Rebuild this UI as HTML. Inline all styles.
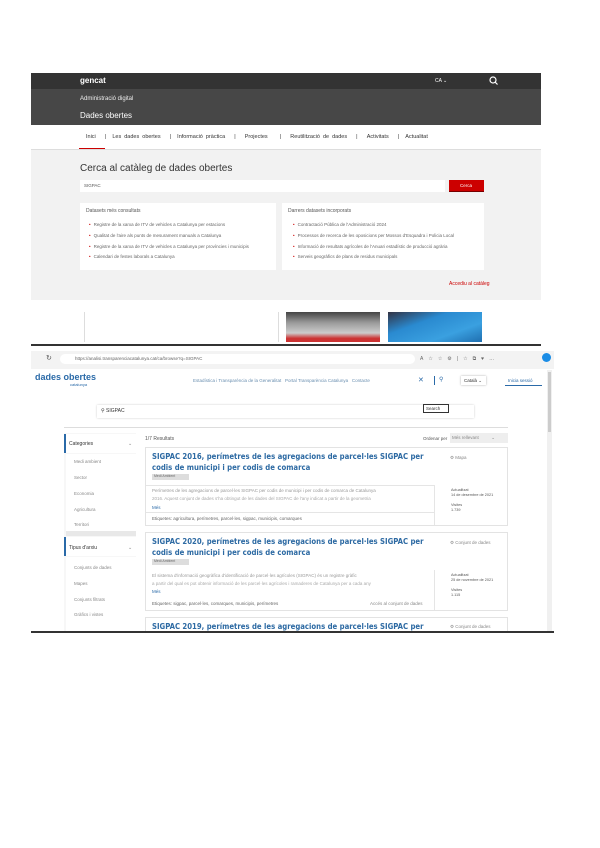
<!DOCTYPE html>
<html><head><meta charset="utf-8"><style>
*{margin:0;padding:0;box-sizing:border-box}
body{width:600px;height:848px;background:#fff;position:relative;overflow:hidden;font-family:"Liberation Sans",sans-serif}
.a{position:absolute;white-space:nowrap}
.t{font-size:5px;color:#555}
.li{font-size:4.5px;color:#666}
.li b{color:#c00;font-weight:normal;margin-right:3px}
.ct{font-size:7.7px;color:#2d6aa3;font-weight:bold;line-height:11px;font-family:"DejaVu Sans Condensed","Liberation Sans",sans-serif;letter-spacing:0}
.card{position:absolute;left:145px;width:363px;background:#fff;border:1px solid #e3e3e3}
.sm{font-size:4.5px;color:#888}
</style></head><body>
<div class="a" style="left:31px;top:73px;width:510px;height:16px;background:#333"></div>
<div class="a" style="left:31px;top:89px;width:510px;height:36px;background:#474747"></div>
<div class="a" style="left:80px;top:76px;font-size:8px;color:#fff;font-weight:bold">gencat</div>
<div class="a" style="left:435px;top:78px;font-size:5px;color:#fff">CA ⌄</div>
<svg class="a" style="left:489px;top:76px" width="9" height="9"><circle cx="4" cy="4" r="3" fill="none" stroke="#fff" stroke-width="1.2"/><line x1="6" y1="6" x2="8.5" y2="8.5" stroke="#fff" stroke-width="1.2"/></svg>
<div class="a" style="left:80px;top:96px;font-size:6px;color:#eee">Administració digital</div>
<div class="a" style="left:80px;top:111px;font-size:8px;color:#fff">Dades obertes</div>
<div class="a" style="left:31px;top:125px;width:510px;height:25px;background:#fff"></div>
<div class="a" style="left:86px;top:134px;font-size:5.5px;color:#333;word-spacing:1.5px">Inici &nbsp;&nbsp;| &nbsp;Les dades obertes &nbsp;&nbsp;| &nbsp;Informació pràctica &nbsp;&nbsp;| &nbsp;&nbsp;Projectes &nbsp;&nbsp;&nbsp;| &nbsp;&nbsp;Reutilització de dades &nbsp;&nbsp;| &nbsp;&nbsp;Activitats &nbsp;&nbsp;| &nbsp;Actualitat</div>
<div class="a" style="left:79px;top:148px;width:26px;height:1px;background:#c00"></div>
<div class="a" style="left:31px;top:149px;width:510px;height:1px;background:#ddd"></div>
<div class="a" style="left:31px;top:150px;width:510px;height:150px;background:#f2f2f2"></div>
<div class="a" style="left:80px;top:163px;font-size:10px;color:#333">Cerca al catàleg de dades obertes</div>
<div class="a" style="left:80px;top:180px;width:365px;height:12px;background:#fff"></div>
<div class="a" style="left:84px;top:183px;font-size:4.5px;color:#555">SIGPAC</div>
<div class="a" style="left:449px;top:180px;width:35px;height:12px;background:#c00;border-bottom:1px solid #700"></div>
<div class="a" style="left:460px;top:183px;font-size:4.5px;color:#fff">Cerca</div>
<div class="a" style="left:80px;top:203px;width:196px;height:67px;background:#fff"></div>
<div class="a" style="left:282px;top:203px;width:202px;height:67px;background:#fff"></div>
<div class="a t" style="left:86px;top:208px">Datasets més consultats</div>
<div class="a li" style="left:89px;top:222px"><b>•</b>Registre de la xarxa de ITV de vehicles a Catalunya per estacions</div>
<div class="a li" style="left:89px;top:233px"><b>•</b>Qualitat de l'aire als punts de mesurament manuals a Catalunya</div>
<div class="a li" style="left:89px;top:244px"><b>•</b>Registre de la xarxa de ITV de vehicles a Catalunya per províncies i municipis</div>
<div class="a li" style="left:89px;top:254px"><b>•</b>Calendari de festes laborals a Catalunya</div>
<div class="a t" style="left:288px;top:208px">Darrers datasets incorporats</div>
<div class="a li" style="left:293px;top:222px"><b>•</b>Contractació Pública de l'Administració 2024</div>
<div class="a li" style="left:293px;top:233px"><b>•</b>Processos de recerca de les oposicions per Mossos d'Esquadra i Policia Local</div>
<div class="a li" style="left:293px;top:244px"><b>•</b>Informació de resultats agrícoles de l'Anuari estadístic de producció agrària</div>
<div class="a li" style="left:293px;top:254px"><b>•</b>Serveis geogràfics de plans de residus municipals</div>
<div class="a" style="left:449px;top:281px;font-size:5px;color:#c00">Accediu al catàleg</div>
<div class="a" style="left:84px;top:312px;width:1px;height:30px;background:#ddd"></div>
<div class="a" style="left:278px;top:312px;width:1px;height:30px;background:#ddd"></div>
<div class="a" style="left:286px;top:312px;width:94px;height:30px;background:linear-gradient(#444 0%,#999 35%,#ccc 70%,#c33 88%)"></div>
<div class="a" style="left:388px;top:312px;width:94px;height:30px;background:linear-gradient(160deg,#334 0%,#2a8ad0 35%,#3aa0e0 70%,#1f6fb0)"></div>
<div class="a" style="left:31px;top:344px;width:510px;height:2px;background:#333"></div>

<div class="a" style="left:31px;top:351px;width:523px;height:18px;background:#f3f3f3"></div>
<div class="a" style="left:60px;top:354px;width:355px;height:10px;background:#fff;border-radius:5px"></div>
<div class="a" style="left:46px;top:354px;font-size:7px;color:#555">↻</div>
<div class="a" style="left:75px;top:356px;font-size:4.5px;color:#666">https://analisi.transparenciacatalunya.cat/ca/browse?q=SIGPAC</div>
<div class="a" style="left:420px;top:356px;font-size:5px;color:#666;letter-spacing:5px">A☆☆⚙|☆⧉♥…</div>
<div class="a" style="left:542px;top:353px;width:9px;height:9px;border-radius:50%;background:#1b8de6"></div>
<div class="a" style="left:547px;top:370px;width:5px;height:262px;background:#f0f0f0"></div>
<div class="a" style="left:548px;top:372px;width:3px;height:60px;background:#ccc"></div>
<div class="a" style="left:35px;top:372px;font-size:9px;color:#2a6aa8;font-weight:bold">dades obertes</div>
<div class="a" style="left:70px;top:382px;font-size:4px;color:#2a6aa8">catalunya</div>
<div class="a" style="left:193px;top:378px;font-size:4.5px;color:#6a8fb0">Estadística i Transparència de la Generalitat &nbsp; Portal Transparència Catalunya &nbsp; Contacte</div>
<div class="a" style="left:418px;top:376px;font-size:7px;color:#2a6aa8">✕</div>
<div class="a" style="left:434px;top:376px;width:1px;height:9px;background:#2a6aa8"></div>
<div class="a" style="left:439px;top:376px;font-size:6px;color:#2a6aa8">⚲</div>
<div class="a" style="left:461px;top:376px;width:25px;height:9px;background:#fff;box-shadow:0 0 2px #aaa;font-size:4.5px;color:#333;padding:2px 3px">Català ⌄</div>
<div class="a" style="left:508px;top:378px;font-size:4.5px;color:#2a6aa8">Inicia sessió</div>
<div class="a" style="left:505px;top:385px;width:37px;height:1px;background:#2a6aa8"></div>
<div class="a" style="left:97px;top:405px;width:377px;height:13px;background:#fff;box-shadow:0 0 2px #ccc"></div>
<div class="a" style="left:101px;top:408px;font-size:5px;color:#333">⚲ SIGPAC</div>
<div class="a" style="left:423px;top:404px;width:26px;height:9px;border:1px solid #333;font-size:4.5px;color:#333;padding:1px 2px;background:#fff">Search</div>
<div class="a" style="left:64px;top:427px;width:444px;height:1px;background:#ddd"></div>
<div class="a" style="left:64px;top:433px;width:72px;height:200px;background:#f7f7f7"></div>
<div class="a" style="left:64px;top:434px;width:72px;height:19px;background:#fff;border-left:2px solid #2a6aa8"></div>
<div class="a" style="left:69px;top:441px;font-size:5px;color:#333">Categories</div>
<div class="a" style="left:128px;top:441px;font-size:5px;color:#888">⌄</div>
<div class="a" style="left:66px;top:454px;width:70px;height:78px;background:#fff"></div>
<div class="a sm" style="left:74px;top:459px">Medi ambient</div>
<div class="a sm" style="left:74px;top:475px">Sector</div>
<div class="a sm" style="left:74px;top:491px">Economia</div>
<div class="a sm" style="left:74px;top:507px">Agricultura</div>
<div class="a sm" style="left:74px;top:522px">Territori</div>
<div class="a" style="left:66px;top:531px;width:70px;height:5px;background:#e8e8e8"></div>
<div class="a" style="left:64px;top:537px;width:72px;height:19px;background:#fff;border-left:2px solid #2a6aa8"></div>
<div class="a" style="left:69px;top:545px;font-size:5px;color:#333">Tipus d'arxiu</div>
<div class="a" style="left:128px;top:545px;font-size:5px;color:#888">⌄</div>
<div class="a" style="left:66px;top:557px;width:70px;height:76px;background:#fff"></div>
<div class="a sm" style="left:74px;top:565px">Conjunts de dades</div>
<div class="a sm" style="left:74px;top:581px">Mapes</div>
<div class="a sm" style="left:74px;top:597px">Conjunts filtrats</div>
<div class="a sm" style="left:74px;top:612px">Gràfics i vistes</div>
<div class="a" style="left:145px;top:436px;font-size:5px;color:#555">1/7 Resultats</div>
<div class="a" style="left:423px;top:436px;font-size:4.5px;color:#555">Ordenar per</div>
<div class="a" style="left:450px;top:433px;width:58px;height:10px;background:#eee;font-size:4.5px;color:#888;padding:2px">Més rellevant &nbsp;&nbsp;&nbsp;&nbsp;&nbsp;&nbsp;&nbsp;&nbsp;&nbsp;⌄</div>

<div class="card" style="top:447px;height:79px"></div>
<div class="a ct" style="left:152px;top:451px">SIGPAC 2016, perímetres de les agregacions de parcel·les SIGPAC per<br>codis de municipi i per codis de comarca</div>
<div class="a" style="left:152px;top:474px;width:37px;height:6px;background:#ddd;font-size:3.5px;color:#666;padding-left:2px">Medi Ambient</div>
<div class="a sm" style="left:450px;top:455px">⚙ Mapa</div>
<div class="a" style="left:146px;top:485px;width:289px;height:1px;background:#e5e5e5"></div>
<div class="a" style="left:434px;top:485px;width:1px;height:40px;background:#e5e5e5"></div>
<div class="a sm" style="left:152px;top:488px;color:#999">Perímetres de les agregacions de parcel·les SIGPAC per codis de municipi i per codis de comarca de Catalunya</div>
<div class="a sm" style="left:152px;top:496px;color:#aaa">2016. Aquest conjunt de dades s'ha obtingut de les dades del SIGPAC de l'any indicat a partir de la geometria</div>
<div class="a" style="left:152px;top:505px;font-size:4.5px;color:#2a6aa8">Més</div>
<div class="a" style="left:146px;top:512px;width:289px;height:1px;background:#e5e5e5"></div>
<div class="a sm" style="left:152px;top:516px;color:#666">Etiquetes: agricultura, perímetres, parcel·les, sigpac, municipis, comarques</div>
<div class="a" style="left:451px;top:488px;font-size:3.8px;color:#555;line-height:5px">Actualitzat<br>14 de desembre de 2021<br><br>Visites<br>1.739</div>

<div class="card" style="top:532px;height:79px"></div>
<div class="a ct" style="left:152px;top:536px">SIGPAC 2020, perímetres de les agregacions de parcel·les SIGPAC per<br>codis de municipi i per codis de comarca</div>
<div class="a" style="left:152px;top:559px;width:37px;height:6px;background:#ddd;font-size:3.5px;color:#666;padding-left:2px">Medi Ambient</div>
<div class="a sm" style="left:450px;top:540px">⚙ Conjunt de dades</div>
<div class="a" style="left:434px;top:570px;width:1px;height:40px;background:#e5e5e5"></div>
<div class="a sm" style="left:152px;top:573px;color:#999">El sistema d'informació geogràfica d'identificació de parcel·les agrícoles (SIGPAC) és un registre gràfic</div>
<div class="a sm" style="left:152px;top:581px;color:#aaa">a partir del qual es pot obtenir informació de les parcel·les agrícoles i ramaderes de Catalunya per a cada any</div>
<div class="a" style="left:152px;top:589px;font-size:4.5px;color:#2a6aa8">Més</div>
<div class="a sm" style="left:152px;top:601px;color:#666">Etiquetes: sigpac, parcel·les, comarques, municipis, perímetres</div>
<div class="a sm" style="left:370px;top:601px">Accés al conjunt de dades</div>
<div class="a" style="left:451px;top:573px;font-size:3.8px;color:#555;line-height:5px">Actualitzat<br>25 de novembre de 2021<br><br>Visites<br>1.115</div>

<div class="card" style="top:617px;height:16px;border-bottom:none"></div>
<div class="a ct" style="left:152px;top:621px">SIGPAC 2019, perímetres de les agregacions de parcel·les SIGPAC per</div>
<div class="a sm" style="left:450px;top:624px">⚙ Conjunt de dades</div>
<div class="a" style="left:31px;top:631px;width:523px;height:2px;background:#333"></div>
</body></html>
